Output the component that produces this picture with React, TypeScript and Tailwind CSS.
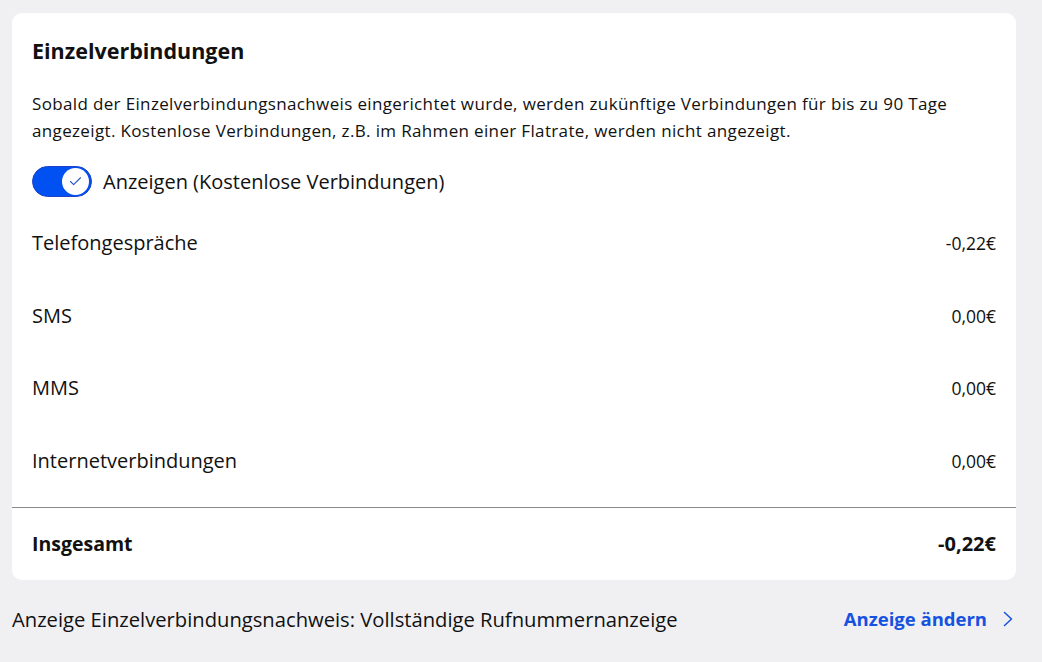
import { Check } from "lucide-react"

const rows = [
  { label: "Telefongespräche", value: "-0,22€" },
  { label: "SMS", value: "0,00€" },
  { label: "MMS", value: "0,00€" },
  { label: "Internetverbindungen", value: "0,00€" },
]

export default function App() {
  return (
    <div className="min-h-[662px] bg-[#f0f0f3] px-3 pt-[13px] font-['Open_Sans',sans-serif] text-[#111]">
      <div className="w-[1004px] rounded-[10px] bg-white">
        <div className="px-5 pt-[23px]">
          <h2 className="text-[21.5px] font-bold leading-[30px]">Einzelverbindungen</h2>
          <p className="mt-[23.5px] text-[17px] leading-[27px] tracking-[0.35px]">
            Sobald der Einzelverbindungsnachweis eingerichtet wurde, werden zukünftige Verbindungen für bis zu 90 Tage
            <br />
            angezeigt. Kostenlose Verbindungen, z.B. im Rahmen einer Flatrate, werden nicht angezeigt.
          </p>
          <div className="mt-[22.5px] flex items-center gap-[11px]">
            <div className="flex h-[31px] w-[60px] items-center justify-end rounded-full border border-[#1d43c4] bg-[#0050f2] px-[2px]">
              <div className="flex h-[27px] w-[27px] items-center justify-center rounded-full bg-white">
                <Check className="h-[15px] w-[15px] text-[#2a55c8]" strokeWidth={1.75} />
              </div>
            </div>
            <span className="text-[20px] leading-[30px]">Anzeigen (Kostenlose Verbindungen)</span>
          </div>
          <div className="mt-[31px] flex flex-col gap-[42.5px] pb-[31.5px]">
            {rows.map((r) => (
              <div key={r.label} className="flex h-[30px] items-center justify-between">
                <span className="text-[20px] leading-[30px]">{r.label}</span>
                <span className="text-[17.5px] leading-[30px]">{r.value}</span>
              </div>
            ))}
          </div>
        </div>
        <div className="border-t border-[#8a8a8a]" />
        <div className="flex h-[72px] items-center justify-between px-5">
          <span className="text-[19.5px] font-bold">Insgesamt</span>
          <span className="text-[20px] font-bold">-0,22€</span>
        </div>
      </div>
      <div className="mt-[24px] flex w-[1004px] items-center justify-between">
        <span className="text-[20.2px] leading-[30px]">Anzeige Einzelverbindungsnachweis: Vollständige Rufnummernanzeige</span>
        <a className="mr-[3px] flex items-center gap-[16px] text-[18.5px] font-bold leading-[30px] text-[#1652e0]">
          Anzeige ändern
          <svg width="10" height="16" viewBox="0 0 10 16" fill="none">
            <path d="M1.5 1.5 L8.5 8 L1.5 14.5" stroke="currentColor" strokeWidth="1.5" strokeLinecap="round" strokeLinejoin="round" />
          </svg>
        </a>
      </div>
    </div>
  )
}
